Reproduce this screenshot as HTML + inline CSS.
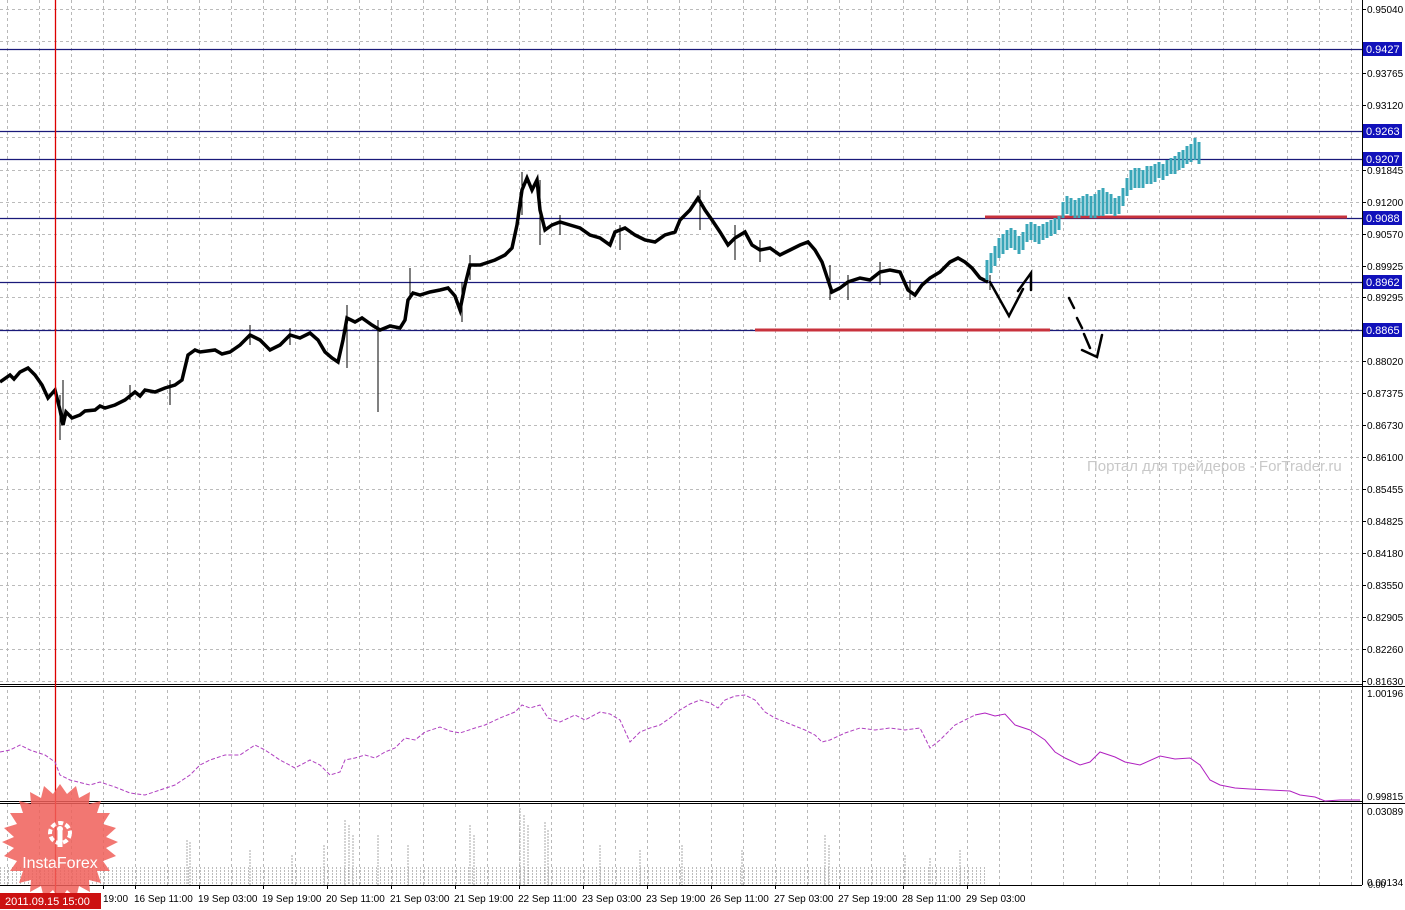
<!DOCTYPE html>
<html><head><meta charset="utf-8"><style>
html,body{margin:0;padding:0;background:#fff;width:1405px;height:910px;overflow:hidden;font-family:"Liberation Sans",Tahoma,sans-serif}
svg{position:absolute;left:0;top:0}
</style></head><body>
<svg width="1405" height="910" viewBox="0 0 1405 910" xmlns="http://www.w3.org/2000/svg" font-family="Liberation Sans, sans-serif">
<defs>
<pattern id="vg" x="7" y="0" width="32" height="6" patternUnits="userSpaceOnUse"><rect x="0" y="0" width="1" height="3" fill="#b8b8b8"/></pattern>
<pattern id="vol" x="0" y="0" width="4" height="3" patternUnits="userSpaceOnUse"><rect x="0" y="0" width="1" height="2" fill="#bdbdbd"/></pattern>
</defs>
<rect x="0" y="0" width="1362" height="684" fill="url(#vg)"/>
<rect x="0" y="687" width="1362" height="113" fill="url(#vg)"/>
<rect x="0" y="804" width="1362" height="81" fill="url(#vg)"/>
<g stroke="#bbb" stroke-width="1" stroke-dasharray="3,3">
<path d="M0 9.5H1362M0 41.5H1362M0 73.5H1362M0 105.5H1362M0 137.5H1362M0 170.5H1362M0 202.5H1362M0 234.5H1362M0 266.5H1362M0 297.5H1362M0 329.5H1362M0 361.5H1362M0 393.5H1362M0 425.5H1362M0 457.5H1362M0 489.5H1362M0 521.5H1362M0 553.5H1362M0 585.5H1362M0 617.5H1362M0 649.5H1362M0 681.5H1362"/>
</g>
<path d="M1362.5 0V885" stroke="#000"/>
<path d="M0 684.5H1362M0 686.5H1405M0 801.5H1362M0 803.5H1405M0 885.5H1362" stroke="#000"/>
<path d="M1362 9.5h4M1362 73.5h4M1362 105.5h4M1362 170.5h4M1362 202.5h4M1362 234.5h4M1362 266.5h4M1362 297.5h4M1362 361.5h4M1362 393.5h4M1362 425.5h4M1362 457.5h4M1362 489.5h4M1362 521.5h4M1362 553.5h4M1362 585.5h4M1362 617.5h4M1362 649.5h4M1362 681.5h4" stroke="#000"/>
<g stroke="#1a1a7a" stroke-width="1.2">
<path d="M0 49.5H1362M0 131.5H1362M0 159.5H1362M0 218.5H1362M0 282.5H1362M0 330.5H1362"/>
</g>
<path d="M985 217H1347M755 330H1050" stroke="#c8323c" stroke-width="3"/>
<polyline fill="none" stroke="#000" stroke-width="3.5" stroke-linejoin="miter" points="0,382 10,375 14,379 20,372 28,368 35,375 42,385 48,398 55,390 60,410 63,425 66,412 72,418 80,415 85,411 95,410 100,406 105,408 115,405 125,400 135,392 140,396 145,390 155,392 165,388 175,385 182,380 188,355 195,350 200,352 215,350 222,354 230,352 240,345 250,335 260,340 270,350 280,345 290,335 300,338 310,333 318,340 325,352 332,358 338,362 343,340 347,318 355,322 362,318 372,325 380,330 390,326 400,328 405,320 408,300 413,293 420,295 430,292 440,290 448,288 455,296 460,310 465,285 470,265 480,265 495,260 505,255 512,248 517,225 522,190 527,178 532,190 537,180 540,210 545,230 552,225 560,222 570,225 580,228 590,235 600,238 610,245 615,232 625,228 635,235 645,240 655,242 665,235 675,232 680,220 690,210 698,198 705,210 712,220 720,232 728,245 735,238 745,232 752,245 760,250 770,248 780,255 790,250 800,245 808,242 815,250 822,262 828,280 832,292 840,288 848,282 860,278 870,280 880,272 890,270 900,272 908,290 915,295 922,285 930,278 940,272 950,262 958,258 965,262 972,268 980,278 988,282"/>
<g stroke="#000" stroke-width="1">
<path d="M60 395V440M378 320V412M522 172V215M540 180V245M700 190V230M848 275V300M63 380V425M347 305V368M410 268V300M462 282V322M170 380V405M130 385V400M735 225V260M910 280V300M990 275V290M250 325V345M290 328V345M470 255V280M560 215V235M620 225V250M760 240V262M830 265V300M880 262V285"/>
</g>
<path d="M55.5 0V893" stroke="#dd0000" stroke-width="1.3"/>
<path stroke="#3aa6b8" stroke-width="3" fill="none" d="M987 260v20M991 253v20M995 246v20M999 238v20M1003 234v20M1007 230v20M1011 228v20M1015 230v20M1019 236v18M1023 232v18M1027 224v18M1031 222v18M1035 224v18M1039 226v18M1043 224v16M1047 222v16M1051 220v16M1055 218v16M1059 216v14M1063 202v16M1067 196v18M1071 198v18M1075 200v18M1079 198v20M1083 196v20M1087 194v22M1091 196v22M1095 194v24M1099 190v26M1103 188v28M1107 192v22M1111 194v20M1115 198v18M1119 196v18M1123 188v18M1127 178v18M1131 170v20M1135 168v20M1139 168v20M1143 170v18M1147 166v18M1151 166v18M1155 164v18M1159 162v16M1163 164v16M1167 160v16M1171 158v16M1175 156v18M1179 152v18M1183 150v18M1187 146v18M1191 144v18M1195 138v22M1199 142v22"/>
<g stroke="#000" stroke-width="2.5" fill="none" stroke-linecap="round">
<path d="M990 282L1009 316L1023 289"/>
<path d="M1018 291L1031 273L1031 290"/>
<path d="M1069 298l5 10M1077 318l5 10M1084 334l6 14"/>
<path d="M1082 350L1097 357L1102 335"/>
</g>
<text x="1087" y="471" font-size="15" fill="#c8c8c8">Портал для трейдеров - ForTrader.ru</text>
<g font-size="10" fill="#000">
<text x="1367" y="13">0.95040</text>
<text x="1367" y="77">0.93765</text>
<text x="1367" y="109">0.93120</text>
<text x="1367" y="174">0.91845</text>
<text x="1367" y="206">0.91200</text>
<text x="1367" y="238">0.90570</text>
<text x="1367" y="270">0.89925</text>
<text x="1367" y="301">0.89295</text>
<text x="1367" y="365">0.88020</text>
<text x="1367" y="397">0.87375</text>
<text x="1367" y="429">0.86730</text>
<text x="1367" y="461">0.86100</text>
<text x="1367" y="493">0.85455</text>
<text x="1367" y="525">0.84825</text>
<text x="1367" y="557">0.84180</text>
<text x="1367" y="589">0.83550</text>
<text x="1367" y="621">0.82905</text>
<text x="1367" y="653">0.82260</text>
<text x="1367" y="685">0.81630</text>
<text x="1367" y="697">1.00196</text>
<text x="1367" y="800">0.99815</text>
<text x="1367" y="815">0.03089</text>
<text x="1367" y="886">0.00134</text>
</g>
<g font-size="11" fill="#fff">
<rect x="1363" y="42" width="39" height="14" fill="#1111bb"/><text x="1366" y="53">0.9427</text>
<rect x="1363" y="124" width="39" height="14" fill="#1111bb"/><text x="1366" y="135">0.9263</text>
<rect x="1363" y="152" width="39" height="14" fill="#1111bb"/><text x="1366" y="163">0.9207</text>
<rect x="1363" y="211" width="39" height="14" fill="#1111bb"/><text x="1366" y="222">0.9088</text>
<rect x="1363" y="275" width="39" height="14" fill="#1111bb"/><text x="1366" y="286">0.8962</text>
<rect x="1363" y="323" width="39" height="14" fill="#1111bb"/><text x="1366" y="334">0.8865</text>
</g>
<polyline fill="none" stroke="#b040c0" stroke-width="1" stroke-dasharray="4,2" points="0,752 10,750 20,745 30,750 45,755 55,762 60,775 70,780 90,785 100,782 115,787 130,793 145,795 160,790 175,785 190,775 200,765 210,760 225,755 240,755 255,745 265,750 280,760 295,768 310,760 320,765 330,775 340,772 345,760 355,758 365,755 375,758 385,752 395,748 405,738 415,740 425,732 440,727 450,731 460,733 475,728 485,725 500,718 515,712 522,705 530,708 540,705 548,718 560,722 575,715 585,720 600,712 610,714 620,720 630,742 640,732 650,728 660,725 670,718 680,710 690,704 700,700 710,703 718,708 725,700 735,696 745,695 755,700 765,712 775,718 790,724 805,730 815,735 822,742 830,740 845,733 860,728 875,730 890,728 905,730 920,728 930,748 940,740 955,725 965,720 975,715"/>
<polyline fill="none" stroke="#b020c0" stroke-width="1" points="975,715 985,713 995,716 1005,714 1015,725 1030,730 1045,740 1055,752 1065,758 1080,765 1090,762 1100,752 1115,757 1125,762 1140,765 1160,756 1175,759 1190,758 1200,765 1210,780 1220,785 1235,788 1250,789 1270,790 1290,791 1300,795 1315,797 1325,801 1340,800 1360,800"/>
<rect x="0" y="866" width="985" height="19" fill="url(#vol)"/>
<g stroke="#a8a8a8" stroke-width="1" stroke-dasharray="2,1">
<path d="M187 840V885M190 842V885M250 850V885M292 855V885M324 845V885M345 820V885M349 825V885M353 835V885M378 835V885M408 845V885M470 825V885M474 835V885M520 808V885M524 815V885M528 825V885M545 822V885M548 830V885M600 845V885M640 850V885M682 845V885M742 850V885M825 835V885M829 845V885M905 855V885M960 850V885M930 858V885"/>
</g>
<path d="M103.5 885v4M135.5 885v4M199.5 885v4M263.5 885v4M327.5 885v4M391.5 885v4M455.5 885v4M519.5 885v4M583.5 885v4M647.5 885v4M711.5 885v4M775.5 885v4M839.5 885v4M903.5 885v4M967.5 885v4" stroke="#000"/>
<g font-size="10" fill="#000">
<text x="103" y="902">19:00</text>
<text x="134" y="902">16 Sep 11:00</text>
<text x="198" y="902">19 Sep 03:00</text>
<text x="262" y="902">19 Sep 19:00</text>
<text x="326" y="902">20 Sep 11:00</text>
<text x="390" y="902">21 Sep 03:00</text>
<text x="454" y="902">21 Sep 19:00</text>
<text x="518" y="902">22 Sep 11:00</text>
<text x="582" y="902">23 Sep 03:00</text>
<text x="646" y="902">23 Sep 19:00</text>
<text x="710" y="902">26 Sep 11:00</text>
<text x="774" y="902">27 Sep 03:00</text>
<text x="838" y="902">27 Sep 19:00</text>
<text x="902" y="902">28 Sep 11:00</text>
<text x="966" y="902">29 Sep 03:00</text>
</g>
<text x="1368" y="888" font-size="9" fill="#000">0.00</text>
<g transform="translate(60,842)" opacity="0.85">
<polygon fill="#f0605a" points="0,-58 7,-48 16,-56 19,-44 30,-50 29,-38 41,-41 37,-29 50,-29 43,-18 56,-14 46,-5 58,0 46,6 56,14 43,19 50,29 37,29 41,41 29,38 30,50 19,44 16,56 7,48 0,58 -7,48 -16,56 -19,44 -30,50 -29,38 -41,41 -37,29 -50,29 -43,19 -56,14 -46,6 -58,0 -46,-5 -56,-14 -43,-18 -50,-29 -37,-29 -41,-41 -29,-38 -30,-50 -19,-44 -16,-56 -7,-48"/>
<circle cx="0" cy="-9" r="10" fill="none" stroke="#fff" stroke-width="4" stroke-dasharray="5,2.5"/>
<rect x="-2.5" y="-12" width="5" height="17" fill="#fff"/>
<circle cx="0" cy="-13" r="3" fill="#fff"/>
<text x="0" y="26" font-size="16" fill="#fff" text-anchor="middle">InstaForex</text>
</g>
<rect x="0" y="893" width="101" height="16" fill="#cc1111"/>
<text x="5" y="905" font-size="11" fill="#fff">2011.09.15 15:00</text>
</svg>
</body></html>
